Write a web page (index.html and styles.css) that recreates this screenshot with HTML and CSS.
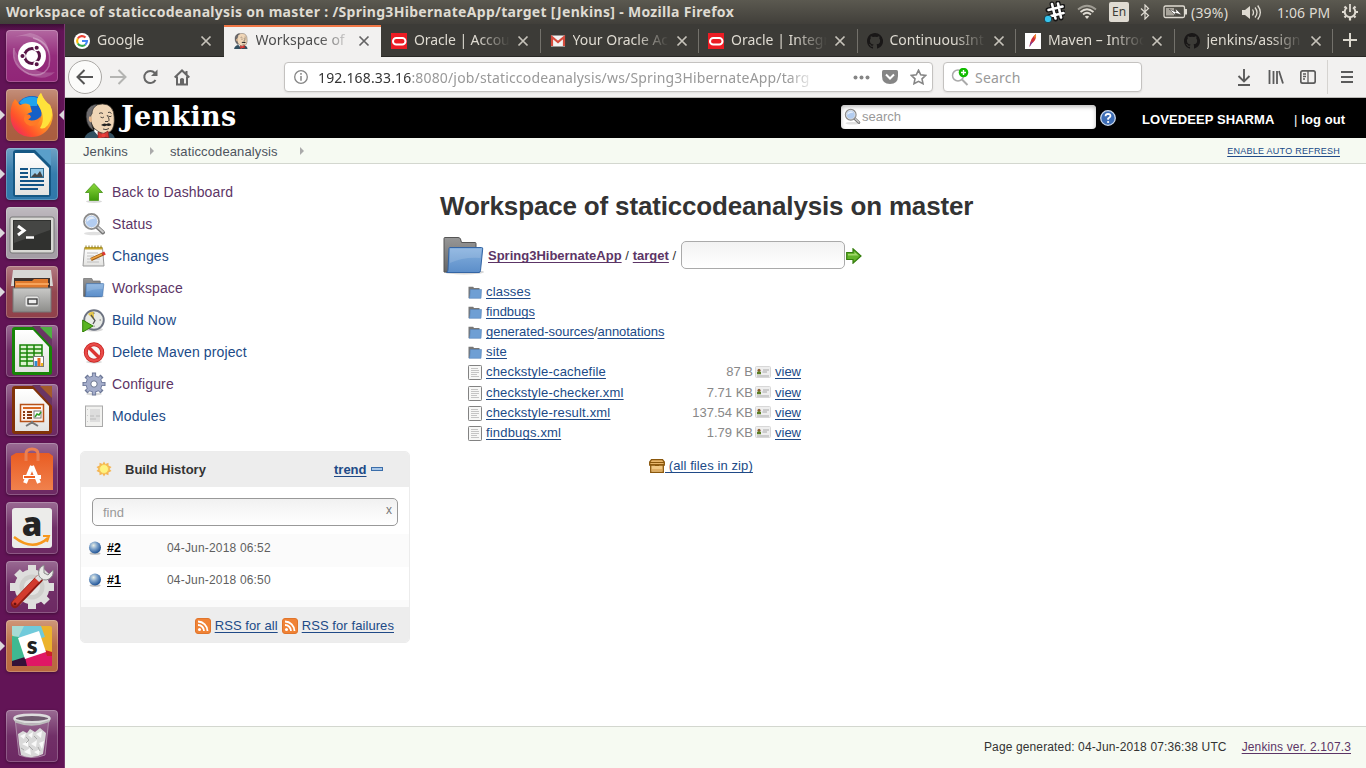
FILE: index.html
```html
<!DOCTYPE html>
<html lang="en">
<head>
<meta charset="utf-8">
<title>Workspace of staticcodeanalysis on master</title>
<link rel="stylesheet" href="styles.css">
</head>
<body>
<svg class="defs" width="0" height="0">
  <defs>
    <linearGradient id="gBlue" x1="0" y1="0" x2="0" y2="1"><stop offset="0" stop-color="#85b0de"/><stop offset="1" stop-color="#5c8ec9"/></linearGradient>
    <linearGradient id="gGray" x1="0" y1="0" x2="0" y2="1"><stop offset="0" stop-color="#979797"/><stop offset="1" stop-color="#666"/></linearGradient>
    <linearGradient id="gGreen" x1="0" y1="0" x2="0" y2="1"><stop offset="0" stop-color="#8ad83a"/><stop offset="1" stop-color="#3f9a0a"/></linearGradient>
    <linearGradient id="gPaper" x1="0" y1="0" x2="0" y2="1"><stop offset="0" stop-color="#fff"/><stop offset="1" stop-color="#e3e3e1"/></linearGradient>
    <linearGradient id="gMetal" x1="0" y1="0" x2="0" y2="1"><stop offset="0" stop-color="#c9c9c7"/><stop offset="1" stop-color="#8d8d8a"/></linearGradient>
    <radialGradient id="gBall" cx=".38" cy=".32" r=".7"><stop offset="0" stop-color="#e8eee6"/><stop offset=".45" stop-color="#7da2ca"/><stop offset="1" stop-color="#1b4f92"/></radialGradient>
    <linearGradient id="gFox" x1="1" y1="0" x2="0" y2="1"><stop offset="0" stop-color="#fff44f"/><stop offset=".4" stop-color="#ffa022"/><stop offset=".72" stop-color="#ff4f2c"/><stop offset="1" stop-color="#e8147c"/></linearGradient>
    <linearGradient id="gBag" x1="0" y1="0" x2="0" y2="1"><stop offset="0" stop-color="#e95c22"/><stop offset="1" stop-color="#f0814d"/></linearGradient>
    <symbol id="folder" viewBox="0 0 42 38">
      <ellipse cx="21" cy="35" rx="20" ry="2.5" fill="#000" opacity=".16"/>
      <path d="M1 35V1.500Q1 .5 2 .5H15Q17 .5 17.500 2L18.500 5.500H32Q33 5.500 33 6.500V35Z" fill="url(#gGray)" stroke="#555"/>
      <path d="M6 11.500Q6 10.500 7 10.500H38.500Q40 10.500 39.700 12L37.500 33.500Q37.300 35.500 36 35.500H3.500Q4.800 35 5 33Z" fill="url(#gBlue)" stroke="#3465a4"/>
      <path d="M7 12H38.500L37.500 21Q20 20 7 26Z" fill="#fff" opacity=".14"/>
    </symbol>
    <symbol id="smallfolder" viewBox="0 0 14 13">
      <path d="M.5 12V.8H5.200L6 2H11.500V12Z" fill="#777"/>
      <path d="M2.200 3.500H13.500L13 12.300H1Q2 11.500 2.200 3.500Z" fill="#6f9fd4" stroke="#5583b8" stroke-width=".6"/>
    </symbol>
    <symbol id="file" viewBox="0 0 14 15">
      <rect x=".5" y=".5" width="13" height="14" rx=".8" fill="#f7f7f6" stroke="#828282"/>
      <path d="M3 3.500H10M3 5.500H11M3 7.500H11M3 9.500H9M3 11.500H11" stroke="#c4c4c4"/>
    </symbol>
    <symbol id="card" viewBox="0 0 16 12">
      <rect x=".5" y=".5" width="15" height="11" rx="1" fill="#eee" stroke="#d7d7d7"/>
      <circle cx="4" cy="4.200" r="1.500" fill="#8a5a2b"/><path d="M2 8.200V6Q4 4.500 6 6V8.200Z" fill="#5c7d23"/>
      <path d="M8 4H14M7.500 6H12M2 10H14" stroke="#aaa"/>
    </symbol>
    <symbol id="magnifier" viewBox="0 0 24 24">
      <ellipse cx="12" cy="21.500" rx="10" ry="1.800" fill="#000" opacity=".12"/>
      <path d="M14.500 14.500L21 20.500" stroke="#777" stroke-width="4" stroke-linecap="round"/><path d="M15 14.500L21 20" stroke="#ccc" stroke-width="1.800" stroke-linecap="round"/>
      <circle cx="9.500" cy="9.500" r="7.300" fill="#b3cdf0" stroke="#8b8b8b" stroke-width="2.200"/><circle cx="9.500" cy="9.500" r="6.200" fill="none" stroke="#eee"/>
      <path d="M4.700 10Q4.500 5 10 4.500Q12.500 5 13 7Q9 6 4.700 10Z" fill="#fff" opacity=".65"/>
    </symbol>
    <symbol id="oracle" viewBox="0 0 16 16"><rect width="16" height="16" fill="#ec1c24"/><rect x="2" y="5" width="12.500" height="6.500" rx="3.250" fill="none" stroke="#fff" stroke-width="2"/></symbol>
    <symbol id="github" viewBox="0 0 16 16"><path fill="#191717" d="M8 0C3.580 0 0 3.580 0 8c0 3.540 2.290 6.530 5.470 7.590.4.070.55-.17.55-.38V13.700c-2.010.37-2.530-.49-2.690-.94-.09-.23-.48-.94-.82-1.130-.28-.15-.68-.52-.01-.53.63-.01 1.080.58 1.230.82.72 1.210 1.870.87 2.330.66.07-.52.28-.87.51-1.070-1.780-.2-3.640-.89-3.640-3.950 0-.87.31-1.590.82-2.150-.08-.2-.36-1.020.08-2.120 0 0 .67-.21 2.200.82a7.500 7.500 0 0 1 4 0c1.530-1.040 2.200-.82 2.200-.82.44 1.100.16 1.920.08 2.120.51.56.82 1.270.82 2.150 0 3.070-1.870 3.750-3.650 3.950.29.25.54.73.54 1.480v2.220c0 .21.15.46.55.38A8 8 0 0 0 8 0Z"/></symbol>
    <symbol id="close" viewBox="0 0 12 12"><path d="M1.500 1.500L10.500 10.500M10.500 1.500L1.500 10.500" stroke="currentColor" stroke-width="1.700"/></symbol>
    <symbol id="butler" viewBox="0 0 34 37">
      <path d="M1 37Q2 30 10 28L25 29Q32 31 32 37Z" fill="#335061"/>
      <path d="M11 28L18 36L24 29L22 25L12 24Z" fill="#fff"/>
      <path d="M5 17Q4 5 13 2Q27-2 30.500 9Q32.500 20 29.500 26Q25 33 16 29Q10 26 8 20Q5 20 5 17Z" fill="#f0d6b7" stroke="#3a332c" stroke-width=".8"/>
      <path d="M4 19Q1 8 8 3Q14 0 14 2Q9 5 9 11Q7 12 8 18Q9 24 11 28Q5 24 4 19Z" fill="#6d6b6d" stroke="#222" stroke-width=".6"/>
      <path d="M6 14Q8 12 9 16Q9 20 7 19Q5 17 6 14Z" fill="#e3b68c"/>
      <path d="M16 10.500Q18 9 20 10.500M25 9.500Q27 8.500 28.500 10.500M17.500 14Q19.500 15.500 21 14M25.500 13Q27 14.500 28.500 13M24 12Q27.500 17 25 18.500L22 18.500M20 26Q23 27.500 26 25.500" stroke="#222" stroke-width=".8" fill="none"/>
      <path d="M18 22Q21 19.500 23.500 21Q26.500 19 28.500 22Q26 23.500 23.500 22.500Q21 24 18 22Z" fill="#222"/>
      <path d="M15 29L20 31L25 28L26 35L20 34L15 37Z" fill="#d33833" stroke="#81201c" stroke-width=".7"/><circle cx="20.500" cy="32.500" r="2" fill="#ef3d3a"/>
    </symbol>
    <symbol id="rss" viewBox="0 0 16 16"><rect x=".5" y=".5" width="15" height="15" rx="2.500" fill="#f08336" stroke="#e0752c"/><circle cx="4.500" cy="11.500" r="1.500" fill="#fff"/><path d="M3 7A6 6 0 0 1 9 13M3 3.500A9.500 9.500 0 0 1 12.500 13" fill="none" stroke="#fff" stroke-width="1.800"/></symbol>
    <symbol id="ball" viewBox="0 0 14 14"><ellipse cx="7" cy="12.500" rx="5.500" ry="1.300" fill="#000" opacity=".25"/><circle cx="7" cy="6.600" r="6" fill="url(#gBall)"/></symbol>
  </defs>
</svg>

<header class="titlebar">
  <span class="title">Workspace of staticcodeanalysis on master : /Spring3HibernateApp/target [Jenkins] - Mozilla Firefox</span>
  <div class="indicators">
    <svg class="i-slack" width="22" height="22" viewBox="0 0 22 22"><path d="M9 3L12.500 18M15 2L18 17M5 9L20 5.500M6.500 15.500L21 12" stroke="#161616" stroke-width="5" stroke-linecap="round"/><path d="M9 3L12.500 17.500M15 2.500L18 16.500M5.500 9L19.500 5.500M7 15.200L20.500 12" stroke="#fff" stroke-width="2.600" stroke-linecap="round"/><circle cx="5" cy="18" r="3.800" fill="#36c5ee" stroke="#203a42"/></svg>
    <svg class="i-wifi" width="20" height="16" viewBox="0 0 20 16" fill="none" stroke="#dfdbd2" stroke-width="1.700"><path d="M1 5.500Q10-2 19 5.500" opacity=".55"/><path d="M3.500 8Q10 2.500 16.500 8"/><path d="M6 10.500Q10 7 14 10.500"/><path d="M7.800 12.500L10 15L12.200 12.500Q10 11 7.800 12.500" fill="#dfdbd2" stroke="none"/></svg>
    <span class="lang">En</span>
    <svg class="i-bt" width="10" height="16" viewBox="0 0 10 16"><path d="M1 4.500L8.500 11.500L5 15V1L8.500 4.500L1 11.500" fill="none" stroke="#dfdbd2" stroke-width="1.200"/></svg>
    <svg class="i-bat" width="25" height="14" viewBox="0 0 25 14"><rect x="1" y="1" width="20.500" height="11.500" rx="1.500" fill="none" stroke="#dfdbd2" stroke-width="1.300"/><path d="M23 4V9.500" stroke="#dfdbd2" stroke-width="2"/><rect x="3" y="3" width="8" height="7.500" fill="#a8a49b"/><path d="M6 4L13 7L12.500 3.500L19 10L12 8L12.500 10.500Z" fill="#fff" stroke="#44423d" stroke-width=".6"/></svg>
    <span class="bat">(39%)</span>
    <svg class="i-vol" width="21" height="17" viewBox="0 0 21 17"><path d="M1 6H4L9 2V15L4 11H1Z" fill="#dfdbd2"/><path d="M11.500 5.500Q13.500 8.500 11.500 11.500M14 3.500Q18 8.500 14 13.500M16.700 1.500Q22 8.500 16.700 15.500" fill="none" stroke="#dfdbd2" stroke-width="1.300"/></svg>
    <span class="clock">1:06 PM</span>
    <svg class="i-gear" width="18" height="18" viewBox="0 0 18 18" fill="none" stroke="#dfdbd2"><path d="M6 4.500A5.300 5.300 0 1 0 12 4.500" stroke-width="2"/><path d="M9 1V9" stroke-width="1.800"/><path d="M3.500 3.500L5 5M1 9H3.500M3.500 14.500L5 13M9 15V17.500M13 13L14.500 14.500M14.500 9H17M13 5L14.500 3.500" stroke-width="2.200"/></svg>
  </div>
</header>

<div class="desktop">
<nav class="launcher">
  <div class="tile dash"><svg viewBox="0 0 52 52"><path d="M27 8Q47 13 43 36Q38 48 23 44Q5 36 8 18" fill="none" stroke="#fff" opacity=".3" stroke-width="1.500"/><path d="M3 8Q31 0 43 24Q42 6 24 3ZM8 19Q7 38 26 46Q40 51 49 42Q23 46 8 19" fill="#fff" opacity=".18"/><circle cx="26" cy="26" r="14" fill="#fff"/><circle cx="26" cy="26" r="7.500" fill="none" stroke="#571445" stroke-width="3"/><g fill="#571445" stroke="#fff" stroke-width="1.300"><circle cx="16.500" cy="26" r="2.700"/><circle cx="30.700" cy="17.800" r="2.700"/><circle cx="30.700" cy="34.200" r="2.700"/></g></svg></div>
  <div class="tile copper running focused"><svg viewBox="0 0 52 52"><circle cx="26" cy="24" r="17" fill="#1560c8"/><path d="M13 14Q20 5 32 9L31 17L20 17Z" fill="#20a4ed"/><path d="M9 10L14 16Q20 13 24 16L26 23Q21 24 19 28Q23 33 31 32Q40 27 31 14Q31 8 35 4Q38 12 44 16Q49 26 45 35Q39 48 25 48Q9 47 5 32Q3 17 9 10Z" fill="url(#gFox)"/><path d="M31 14Q31 8 35 4Q38 12 44 16Q49 26 42 36Q38 41 34 39Q41 28 31 14" fill="#ffe23b"/><path d="M19 26Q24 24 25 28L22 31Q30 33 35 27Q34 37 24 37Q15 33 19 26" fill="#ff7a26"/></svg></div>
  <div class="tile blue running"><svg viewBox="0 0 52 52"><rect x="7" y="2" width="38" height="47" rx="3" fill="#165884"/><path d="M9 5H28L43 20V47H9Z" fill="url(#gPaper)"/><path d="M29 2H45V18Z" fill="#5a9fca"/><path d="M14 21H22M14 25H22M14 29H22M14 33H38M14 37H38M14 41H32" stroke="#135486" stroke-width="2"/><rect x="24.500" y="20.500" width="13" height="9" fill="#96cae8" stroke="#2f6b90"/><path d="M25 29L29 25L31 27L34 23L37 29Z" fill="#444"/></svg></div>
  <div class="tile silver running"><svg viewBox="0 0 52 52"><rect x="4" y="10" width="44" height="36" rx="2" fill="#d8d8d4" stroke="#777"/><rect x="7" y="13" width="38" height="30" fill="#30312f"/><path d="M8 14H44V23L8 36Z" fill="#fff" opacity=".1"/><path d="M12 19L18 23.500L12 28" stroke="#fff" stroke-width="3" fill="none"/><path d="M20 30.500H28" stroke="#fff" stroke-width="2.500"/></svg></div>
  <div class="tile rose running"><svg viewBox="0 0 52 52"><path d="M7 4H45L47 20H5Z" fill="#d7d7d4"/><path d="M8 12H44V25H8Z" fill="#40322c"/><path d="M9 15H26L28 13H42V24H9Z" fill="#e07a2d"/><path d="M10 18H43" stroke="#ffb36b" stroke-width="1.500"/><path d="M7 22H45V46H7Z" fill="url(#gMetal)" stroke="#777"/><rect x="19" y="30" width="14" height="11" rx="2" fill="#e6e6e4" stroke="#999"/><rect x="22" y="33" width="9" height="5" fill="#eee" stroke="#333" stroke-width="1.300"/></svg></div>
  <div class="tile violet"><svg viewBox="0 0 52 52"><rect x="6" y="2" width="40" height="48" rx="3" fill="#188408"/><path d="M9 5H27L43 22V47H9Z" fill="url(#gPaper)"/><path d="M26 1H34L46 14V22Z" fill="#6a3564"/><path d="M34 2H46V14Z" fill="#4fae43"/><path d="M14 20H36V41H14ZM14 24H36M14 28H36M14 32H36M14 36H36M21 20V41M28 20V41" fill="#dcf3cf" stroke="#188408" stroke-width="1.500"/><rect x="27.500" y="31.500" width="10" height="10" fill="#fff" stroke="#777"/><path d="M30 41V36" stroke="#308bd1" stroke-width="3"/><path d="M33 41V33" stroke="#e56920" stroke-width="3"/><path d="M36 41V38" stroke="#eeb51d" stroke-width="2"/></svg></div>
  <div class="tile violet"><svg viewBox="0 0 52 52"><rect x="6" y="2" width="40" height="48" rx="3" fill="#813309"/><path d="M9 5H27L43 22V47H9Z" fill="url(#gPaper)"/><path d="M26 1H34L46 14V22Z" fill="#6a3564"/><path d="M34 2H46V14Z" fill="#a35b2b"/><rect x="14.500" y="20.500" width="23" height="17" fill="#fff3ec" stroke="#b65117" stroke-width="1.500"/><path d="M17 24H35" stroke="#d96720" stroke-width="2"/><path d="M17 28H19M17 31H19M17 34H19M21 28H26M21 31H26M21 34H26" stroke="#8a3b12" stroke-width="2"/><rect x="28" y="27" width="7" height="7" fill="#fff" stroke="#777"/><path d="M29 33L31 30L33 31L35 28" stroke="#2f9e27" stroke-width="1.500" fill="none"/><path d="M20 42L26 38.500L32 42M26 37V40" stroke="#777" stroke-width="2" fill="none"/></svg></div>
  <div class="tile violet"><svg viewBox="0 0 52 52"><path d="M5 13L10 10H43L47 13V47H5Z" fill="url(#gBag)"/><path d="M20 18V11Q20 6 26 6Q32 6 32 11V18" stroke="#e98054" stroke-width="3" fill="none"/><path d="M26 23L19 40M26 23L33 40" stroke="#fff" stroke-width="4"/><path d="M17 34H35" stroke="#fff" stroke-width="4"/><path d="M18 34H29" stroke="#ef6120" stroke-width="2"/></svg></div>
  <div class="tile violet"><svg viewBox="0 0 52 52"><rect x="6" y="6" width="40" height="40" rx="3" fill="#ececea"/><text x="26" y="33.500" text-anchor="middle" class="amazon">a</text><path d="M8 35Q27 50 42 36" stroke="#f7981d" stroke-width="2.500" fill="none"/><path d="M37 34L43 34L41 40" stroke="#f7981d" stroke-width="2" fill="none"/></svg></div>
  <div class="tile violet"><svg viewBox="0 0 52 52"><g transform="translate(26 26)"><circle r="14" fill="none" stroke="#dededc" stroke-width="7"/><path d="M0-22V22M-22 0H22M-15-15L15 15M15-15L-15 15" stroke="#dededc" stroke-width="8"/><circle r="12.500" fill="#cfcfcc"/><circle r="8" fill="#e4e4e2"/></g><path d="M9 43L33 18" stroke="#8e1b14" stroke-width="8" stroke-linecap="round"/><path d="M9 42L32 18" stroke="#d23b2e" stroke-width="5.500" stroke-linecap="round"/><path d="M31 19L36 14" stroke="#ddd" stroke-width="6"/><path d="M38 4Q31 7 33 15Q37 21 43 18Q48 15 47 9L42 14L38 12Z" fill="#e9e9e6" stroke="#888"/><circle cx="9" cy="43" r="1.500" fill="#611"/></svg></div>
  <div class="tile orange running"><svg viewBox="0 0 52 52"><rect x="6" y="6" width="40" height="40" rx="2" fill="#ecb32c"/><path d="M6 8Q6 6 8 6H35L39 17L14 24L6 8" fill="#70cadb"/><path d="M6 6H18L11 20L6 15Z" fill="#a6dbd5"/><path d="M6 16L13 17L21 41L6 44Z" fill="#3eb991"/><path d="M17 38L38 31L46 35V46H17Z" fill="#e01765"/><path d="M39 30L46 32V36L41 36Z" fill="#cc2027"/><path d="M6 41L19 37L21 46H6Z" fill="#361238"/><path d="M12 18L33 11L40 32L19 39Z" fill="#fff"/><text x="26" y="34" text-anchor="middle" class="slack-s">s</text></svg></div>
  <div class="tile violet trash"><svg viewBox="0 0 52 52"><path d="M9 8L13 45Q26 50 39 45L43 8Z" fill="#fff" fill-opacity=".12" stroke="#b69ab3" stroke-width=".8"/><path d="M12 24L17 21L21 23L24 19L29 22L34 18L40 23L39 31L37 44Q26 50 15 45L13 34Z" fill="#d9d9d9"/><path d="M14 26L20 23L18 29ZM22 25L27 22L26 28ZM30 24L36 21L35 28ZM16 34L22 31L22 37ZM25 34L31 30L30 37ZM33 33L38 31L36 39ZM18 42L24 38L25 45ZM28 42L34 39L33 45Z" fill="#f9f9f9"/><path d="M20 27L23 30L20 33M28 26L31 29M23 36L27 40M32 37L34 41M15 38L18 40" stroke="#a9a9a9" fill="none"/><ellipse cx="26" cy="8.500" rx="17.500" ry="3.800" fill="#6f5b6e" stroke="#ddd" stroke-width="2.500"/><path d="M8.500 10Q26 17 43.500 10V12Q26 19 9 12.500Z" fill="#bbb"/></svg></div>
</nav>

<main class="browser">
  <div class="tabs">
    <div class="tab first"><svg class="fav" viewBox="0 0 16 16"><circle cx="8" cy="8" r="8" fill="#fff"/><g fill="none" stroke-width="2.100"><path d="M11.500 4.500A5 5 0 0 0 3.800 5.500" stroke="#ea4335"/><path d="M3.800 5.500A5 5 0 0 0 3.800 10.500" stroke="#fbbc05"/><path d="M3.800 10.500A5 5 0 0 0 11.300 11.700" stroke="#34a853"/><path d="M11.300 11.700A5 5 0 0 0 13 8H8" stroke="#4285f4"/></g></svg><span class="label">Google</span><svg class="x"><use href="#close"/></svg></div>
    <div class="tab active"><svg class="fav" viewBox="0 0 16 16"><use href="#butler" width="16" height="16"/></svg><span class="label">Workspace of</span><svg class="x"><use href="#close"/></svg></div>
    <div class="tab"><svg class="fav"><use href="#oracle"/></svg><span class="label tight">Oracle | Accou</span><svg class="x"><use href="#close"/></svg></div>
    <div class="tab"><svg class="fav" viewBox="0 0 16 16"><rect x="1" y="2.500" width="14" height="11" fill="#f3f3f3"/><path d="M2 13V4L8 9L14 4V13" fill="none" stroke="#d54b3d" stroke-width="2.200"/></svg><span class="label">Your Oracle Ac</span><svg class="x"><use href="#close"/></svg></div>
    <div class="tab"><svg class="fav"><use href="#oracle"/></svg><span class="label">Oracle | Integr</span><svg class="x"><use href="#close"/></svg></div>
    <div class="tab"><svg class="fav"><use href="#github"/></svg><span class="label">ContinuousInt</span><svg class="x"><use href="#close"/></svg></div>
    <div class="tab"><svg class="fav" viewBox="0 0 16 16"><rect width="16" height="16" fill="#fff"/><path d="M4.500 14Q5 5 11 1Q12 7 6 11Z" fill="#cf3038"/><path d="M4.500 14Q5 10 7 8L7.500 9.500Z" fill="#7b3f9a"/><path d="M9 3L11 1Q11.500 4 10 6Z" fill="#f08b2b"/></svg><span class="label">Maven – Introc</span><svg class="x"><use href="#close"/></svg></div>
    <div class="tab"><svg class="fav"><use href="#github"/></svg><span class="label">jenkins/assign</span><svg class="x"><use href="#close"/></svg></div>
    <div class="newtab"><svg width="14" height="14" viewBox="0 0 14 14"><path d="M7 0V14M0 7H14" stroke="#dcd8cf" stroke-width="2"/></svg></div>
  </div>

  <div class="toolbar">
    <div class="back"><svg width="18" height="16" viewBox="0 0 18 16"><path d="M17 8H2M8.500 1L1.500 8L8.500 15" fill="none" stroke="#555" stroke-width="2"/></svg></div>
    <svg class="fwd" width="17" height="16" viewBox="0 0 17 16"><path d="M0 8H15M8.500 1L15.500 8L8.500 15" fill="none" stroke="#b4b4b2" stroke-width="2"/></svg>
    <svg class="reload" width="16" height="16" viewBox="0 0 16 16"><path d="M13.500 11A6 6 0 1 1 12.800 4" fill="none" stroke="#666" stroke-width="2"/><path d="M15.500 .5V7H9Z" fill="#666"/></svg>
    <svg class="home" width="16" height="17" viewBox="0 0 16 17"><path d="M.7 8.500L8 1.500L15.300 8.500M3 7.500V15.500H13V7.500M12.500 2V6" fill="none" stroke="#666" stroke-width="2"/><path d="M6 15V10Q8 8 10 10V15Z" fill="#666"/></svg>
    <div class="urlbar">
      <svg width="14" height="14" viewBox="0 0 14 14"><circle cx="7" cy="7" r="6.300" fill="none" stroke="#858585" stroke-width="1.300"/><path d="M7 6V10.800M7 3V4.700" stroke="#858585" stroke-width="1.500"/></svg>
      <span class="url"><b>192.168.33.16</b>:8080/job/staticcodeanalysis/ws/Spring3HibernateApp/targ</span>
      <svg class="dots" width="17" height="5" viewBox="0 0 17 5" fill="#858585"><circle cx="2.500" cy="2.500" r="2"/><circle cx="8.500" cy="2.500" r="2"/><circle cx="14.500" cy="2.500" r="2"/></svg>
      <svg class="pocket" width="16" height="14" viewBox="0 0 16 14"><path d="M1.500 0H14.500Q16 0 16 1.500V6Q16 14 8 14Q0 14 0 6V1.500Q0 0 1.500 0Z" fill="#858585"/><path d="M4 4.500L8 8.500L12 4.500" stroke="#fff" stroke-width="2" fill="none"/></svg>
      <svg width="17" height="16" viewBox="0 0 17 16"><path d="M8.500 1.200L10.700 5.800L15.700 6.400L12 9.800L13 14.700L8.500 12.300L4 14.700L5 9.800L1.300 6.400L6.300 5.800Z" fill="none" stroke="#858585" stroke-width="1.600"/></svg>
    </div>
    <div class="searchbar"><svg width="18" height="18" viewBox="0 0 18 18"><circle cx="7" cy="7.500" r="5.500" fill="none" stroke="#aaa" stroke-width="1.500"/><path d="M11 11.500L16.500 17" stroke="#aaa" stroke-width="2"/><circle cx="12.500" cy="4.500" r="4.800" fill="#12bc00"/><path d="M12.500 2V7M10 4.500H15" stroke="#fff" stroke-width="1.400"/></svg><span>Search</span></div>
    <div class="tools">
      <svg width="14" height="17" viewBox="0 0 14 17"><path d="M7 0V12M1.500 7L7 12.500L12.500 7M1 16H13" fill="none" stroke="#5b5b5b" stroke-width="1.900"/></svg>
      <svg width="16" height="14" viewBox="0 0 16 14"><path d="M1.500 0V14M5.500 1V14M9 1V14M11 1L15 13.500" stroke="#5b5b5b" stroke-width="1.800"/></svg>
      <svg width="16" height="14" viewBox="0 0 16 14"><rect x=".8" y=".8" width="14.400" height="12.400" rx="2" fill="none" stroke="#5b5b5b" stroke-width="1.700"/><path d="M8 1V13M3 4H6M3 6.500H6M3 9H5" stroke="#5b5b5b" stroke-width="1.300"/></svg>
      <i class="divider"></i>
      <svg width="12" height="12" viewBox="0 0 12 12"><path d="M0 1H12M0 6H12M0 11H12" stroke="#5b5b5b" stroke-width="1.800"/></svg>
    </div>
  </div>

  <div class="jheader">
    <svg class="mascot" width="34" height="37"><use href="#butler"/></svg>
    <span class="brand">Jenkins</span>
    <div class="jsearch"><svg width="17" height="17"><use href="#magnifier"/></svg><span>search</span></div>
    <svg class="help" width="16" height="16" viewBox="0 0 16 16"><circle cx="8" cy="8" r="7.300" fill="#3d6db5" stroke="#c9d7ea" stroke-width="1.300"/><path d="M5.500 6.300Q5.600 3.800 8 3.800Q10.500 3.900 10.500 6Q10.300 7.200 8.100 8.500V9.800" stroke="#fff" stroke-width="1.700" fill="none"/><circle cx="8.100" cy="12" r="1.100" fill="#fff"/></svg>
    <span class="user">LOVEDEEP SHARMA</span>
    <span class="logout"><i>|</i> log out</span>
  </div>

  <div class="crumbs">
    <span class="c1">Jenkins</span><svg width="4" height="8"><path d="M0 0L4 4L0 8Z" fill="#aaa"/></svg><span class="c2">staticcodeanalysis</span><svg width="4" height="8"><path d="M0 0L4 4L0 8Z" fill="#aaa"/></svg>
    <a class="refresh">ENABLE AUTO REFRESH</a>
  </div>

  <div class="page">
    <aside class="side">
      <div class="tasks">
        <div class="task visited"><svg viewBox="0 0 24 24"><ellipse cx="12" cy="21.500" rx="8" ry="1.500" fill="#000" opacity=".15"/><path d="M12 3.500L20.500 12.500H16.500V20.500H7.500V12.500H3.500Z" fill="url(#gGreen)" stroke="#5aa02c"/></svg><span>Back to Dashboard</span></div>
        <div class="task visited"><svg viewBox="0 0 24 24"><use href="#magnifier"/></svg><span>Status</span></div>
        <div class="task"><svg viewBox="0 0 24 24"><path d="M2.500 4H20.500L22 22H1Z" fill="url(#gPaper)" stroke="#999"/><path d="M2.500 3H20.500V5.500H2.500Z" fill="#c5a72a"/><path d="M4 1.500V4M7 1.500V4M10 1.500V4M13 1.500V4M16 1.500V4M19 1.500V4" stroke="#8b7a28"/><path d="M5 9H16M5 12H12M5 15H18M5 18H17" stroke="#c0c0c0"/><path d="M9 15.500L21 10" stroke="#9a5710" stroke-width="3.400"/><path d="M9 15.300L20 10.300" stroke="#eca240" stroke-width="1.700"/><path d="M20.500 10.200L23 9" stroke="#dc3832" stroke-width="3.400"/></svg><span>Changes</span></div>
        <div class="task visited"><svg viewBox="0 0 24 24"><use href="#folder" x="1" y="2" width="22" height="20"/></svg><span>Workspace</span></div>
        <div class="task"><svg viewBox="0 0 24 24"><ellipse cx="12" cy="21.500" rx="9" ry="2" opacity=".15"/><circle cx="12" cy="12" r="9.800" fill="#e8eae6" stroke="#6c7280" stroke-width="1.900"/><path d="M12 12L6 6Q9 3 12 4Z" fill="#e5c74c"/><path d="M9 7L13 12.500L11 16" stroke="#555" stroke-width="1.300" fill="none"/><path d="M12 4.500V6M19 12H17.500M12 19V17.500" stroke="#777"/><path d="M.7 12L11 18L.7 24Z" fill="#5ab522" stroke="#338207"/></svg><span>Build Now</span></div>
        <div class="task"><svg viewBox="0 0 24 24"><ellipse cx="12" cy="22" rx="8" ry="1.500" opacity=".15"/><circle cx="12" cy="12.500" r="8.200" fill="#f7f7f7" stroke="#c2201d" stroke-width="4"/><circle cx="12" cy="12.500" r="8.200" fill="none" stroke="#e94b49" stroke-width="2.600"/><path d="M6.500 7L17.500 18" stroke="#dc3532" stroke-width="3.300"/></svg><span>Delete Maven project</span></div>
        <div class="task visited"><svg viewBox="0 0 24 24"><ellipse cx="12" cy="22" rx="8" ry="1.300" opacity=".15"/><g stroke="#6c7796" stroke-width="4.200"><path d="M12 .5V23.500M.5 12H23.500M4 4L20 20M20 4L4 20"/></g><circle cx="12" cy="12" r="8" fill="#a3acc9" stroke="#7681a3"/><path d="M12 1.500V22.500M1.500 12H22.500M5 5L19 19M19 5L5 19" stroke="#a3acc9" stroke-width="2.500"/><circle cx="12" cy="12" r="3.200" fill="#fff" stroke="#69748f"/></svg><span>Configure</span></div>
        <div class="task"><svg viewBox="0 0 24 24"><rect x="3.500" y="2" width="17" height="20.500" fill="#f1f1ef" stroke="#aaa"/><path d="M8 5H18V18H8Z" fill="#ddd"/><path d="M8 12H12M14 12H18M8 15H14" stroke="#bbb"/><path d="M5.500 5V19" stroke="#ccc" stroke-dasharray="1 5"/></svg><span>Modules</span></div>
      </div>
      <section class="history">
        <div class="hhead"><svg width="16" height="16" viewBox="0 0 16 16"><path d="M8 .5L9.500 3L12.500 1.800V4.500L15.500 6L13.500 8L15.500 10L12.500 11.500V14.200L9.500 13L8 15.500L6.500 13L3.500 14.200V11.500L.5 10L2.500 8L.5 6L3.500 4.500V1.800L6.500 3Z" fill="#f5b552"/><circle cx="8" cy="8" r="4.500" fill="#fff380" stroke="#f6c65a"/></svg><b>Build History</b><a>trend</a><svg width="12" height="4" viewBox="0 0 12 4"><rect x=".5" y=".5" width="11" height="3" fill="#a9c7e8" stroke="#3b6eaa"/></svg></div>
        <div class="hfind"><div class="find"><span>find</span><i>x</i></div></div>
        <div class="build odd"><svg width="14" height="14"><use href="#ball"/></svg><a>#2</a><span>04-Jun-2018 06:52</span></div>
        <div class="build even"><svg width="14" height="14"><use href="#ball"/></svg><a>#1</a><span>04-Jun-2018 06:50</span></div>
        <div class="hpad"></div>
        <div class="hfoot"><svg width="16" height="16"><use href="#rss"/></svg><a>RSS for all</a><svg width="16" height="16"><use href="#rss"/></svg><a>RSS for failures</a></div>
      </section>
    </aside>

    <section class="main">
      <h1>Workspace of staticcodeanalysis on master</h1>
      <div class="path"><svg width="42" height="38"><use href="#folder"/></svg><a class="p1">Spring3HibernateApp</a><span>/</span><a class="p2">target</a><span>/</span><div class="pathinput"></div><svg class="go" width="16" height="16" viewBox="0 0 16 16"><path d="M.7 4.500H7V.8L15 8L7 15.200V11.500H.7Z" fill="#62b32a" stroke="#357d0d" stroke-width="1.200"/><path d="M2 6H8.500V4L12.500 7.500H2Z" fill="#c4ec91" opacity=".65"/></svg></div>
      <div class="files">
        <div class="row"><svg width="14" height="13"><use href="#smallfolder"/></svg><span class="name wide"><a>classes</a></span></div>
        <div class="row"><svg width="14" height="13"><use href="#smallfolder"/></svg><span class="name"><a>findbugs</a></span></div>
        <div class="row"><svg width="14" height="13"><use href="#smallfolder"/></svg><span class="name"><a>generated-sources</a>/<a>annotations</a></span></div>
        <div class="row"><svg width="14" height="13"><use href="#smallfolder"/></svg><span class="name wide"><a>site</a></span></div>
        <div class="row"><svg width="14" height="15"><use href="#file"/></svg><span class="name wide"><a>checkstyle-cachefile</a></span><span class="size">87 B</span><svg width="16" height="12"><use href="#card"/></svg><a class="view">view</a></div>
        <div class="row"><svg width="14" height="15"><use href="#file"/></svg><span class="name wide"><a>checkstyle-checker.xml</a></span><span class="size">7.71 KB</span><svg width="16" height="12"><use href="#card"/></svg><a class="view">view</a></div>
        <div class="row"><svg width="14" height="15"><use href="#file"/></svg><span class="name wide"><a>checkstyle-result.xml</a></span><span class="size">137.54 KB</span><svg width="16" height="12"><use href="#card"/></svg><a class="view">view</a></div>
        <div class="row"><svg width="14" height="15"><use href="#file"/></svg><span class="name wide"><a>findbugs.xml</a></span><span class="size">1.79 KB</span><svg width="16" height="12"><use href="#card"/></svg><a class="view">view</a></div>
      </div>
      <div class="zip"><svg width="16" height="14" viewBox="0 0 16 14"><path d="M2.500 .7H13.500L15.300 3V6H.7V3Z" fill="#e8b56a" stroke="#8a570c" stroke-width="1.300"/><path d="M1.700 6H14.300V13.300H1.700Z" fill="#f1c783" stroke="#8a570c" stroke-width="1.300"/><path d="M1 3.500H15M6 6.500H10" stroke="#8a570c"/><path d="M3 11H13" stroke="#ca9143"/></svg><a>&nbsp;(all files in zip)</a></div>
    </section>
  </div>

  <footer><span>Page generated: 04-Jun-2018 07:36:38 UTC</span><a>Jenkins ver. 2.107.3</a></footer>
</main>
</div>
</body>
</html>
```
FILE: styles.css
```css
* { box-sizing: border-box; }
body { margin: 0; width: 1366px; height: 768px; overflow: hidden; background: #fff; font-family: "Liberation Sans", Arial, sans-serif; font-size: 13px; color: #333; white-space: nowrap; }
svg { flex: none; display: block; }
.defs { position: absolute; }
i { font-style: normal; }
a { text-decoration: underline; text-decoration-skip-ink: none; text-decoration-thickness: 1px; text-underline-offset: 2px; color: #204a87; }

.titlebar { height: 24px; display: flex; align-items: center; padding-left: 6px; background: linear-gradient(#5b5950, #413f3a); color: #dfdbd2; font-family: "Noto Sans", sans-serif; }
.title { font-size: 14px; font-weight: 700; letter-spacing: .31px; line-height: 24px; }
.indicators { margin-left: auto; display: flex; align-items: center; height: 24px; font-size: 14px; }
.i-slack { margin-right: 12px; }
.i-wifi { margin-right: 12px; }
.lang { width: 20px; height: 20px; border-radius: 2px; background: #dfdbd2; color: #3c3b37; font-size: 12px; line-height: 20px; text-align: center; margin-right: 11px; }
.i-bt { margin-right: 13px; }
.i-bat { margin-right: 3px; }
.bat { width: 38px; margin-right: 12px; letter-spacing: .2px; }
.i-vol { margin-right: 15px; }
.clock { width: 52px; margin-right: 12px; letter-spacing: .1px; }
.i-gear { margin-right: 7px; }

.desktop { display: flex; height: 744px; }
.launcher { width: 65px; background: linear-gradient(#3d0d36, #621456 7px, #621456); border-right: 1px solid #7c3a72; padding: 6px 0 0 6px; display: flex; flex-direction: column; gap: 7px; }
.tile { width: 52px; height: 52px; flex: none; border-radius: 4px; position: relative; box-shadow: inset 0 0 0 1px rgba(255,255,255,.22), 0 1px 3px rgba(0,0,0,.35); background-image: linear-gradient(rgba(255,255,255,.32), rgba(255,255,255,.05) 50%, rgba(255,255,255,.02)); }
.tile svg { width: 52px; height: 52px; }
.dash { background-color: #8f2175; }
.copper { background-color: #a85a3b; }
.blue { background-color: #2b75a8; }
.silver { background-color: #a29ba3; }
.rose { background-color: #8e3d47; }
.violet { background-color: #6a2560; }
.orange { background-color: #b8663b; }
.trash { margin-top: 31px; }
.running::before { content: ""; position: absolute; left: -6px; top: 21px; border: 5px solid transparent; border-left-color: #dcd8dc; border-right: 0; }
.focused::after { content: ""; position: absolute; right: -6px; top: 21px; border: 5px solid transparent; border-right-color: #dcd8dc; border-left: 0; }
.amazon { font: 800 33px "Open Sans", sans-serif; fill: #242424; }
.slack-s { font: 800 24px Lato, sans-serif; fill: #222; }

.browser { width: 1301px; display: flex; flex-direction: column; }
.tabs { height: 33px; flex: none; display: flex; background: #3c3b37; border-bottom: 1px solid #292825; font-family: "Noto Sans", sans-serif; font-size: 14px; color: #dfdbd2; }
.tab { width: 158.5px; flex: none; display: flex; align-items: center; padding: 1px 0 0 9px; background: linear-gradient(#73716b, #73716b) right 5px / 1px 24px no-repeat; }
.tab.first { background: none; }
.tab.active { width: 157.500px; margin: 1px 1px -1px 0; background: #f2f1f0; color: #4c4c4c; border-top: 2px solid #f07746; padding-bottom: 2px; padding-top: 0; height: 32px; }
.fav { width: 16px; height: 16px; }
.label { width: 98px; height: 24px; line-height: 22px; margin-left: 7px; letter-spacing: 0; -webkit-mask-image: linear-gradient(90deg, #000 65%, transparent 98%); mask-image: linear-gradient(90deg, #000 65%, transparent 98%); }
.tight { letter-spacing: -.1px; }
.x { width: 12px; height: 12px; margin-left: 5px; opacity: .85; }
.active .x { margin-left: 4px; }
.newtab { width: 33px; display: flex; align-items: center; justify-content: center; }

.toolbar { height: 41px; flex: none; display: flex; align-items: center; background: #f2f1f0; border-bottom: 1px solid #bab8b5; font-family: "Noto Sans", sans-serif; font-size: 14px; padding-left: 3px; }
.back { width: 34px; height: 34px; border-radius: 50%; border: 1px solid #aaa8a5; background: #fbfbfa; display: flex; align-items: center; justify-content: center; }
.fwd { margin-left: 8px; }
.reload { margin-left: 15px; }
.home { margin-left: 16px; }
.urlbar { width: 649px; height: 30px; margin-left: 94px; border: 1px solid #c4c2c0; border-radius: 4px; background: #fff; display: flex; align-items: center; padding-left: 9px; box-shadow: 0 1px 2px rgba(0,0,0,.08); }
.url { margin-left: 10px; width: 500px; color: #999; letter-spacing: .16px; -webkit-mask-image: linear-gradient(90deg, #000 94%, transparent 99.5%); mask-image: linear-gradient(90deg, #000 94%, transparent 99.5%); }
.url b { font-weight: 400; color: #333; }
.dots { margin-left: 35px; }
.pocket { margin: 0 12px; }
.searchbar { width: 199px; height: 30px; margin-left: 10px; border: 1px solid #c4c2c0; border-radius: 4px; background: #fff; display: flex; align-items: center; gap: 6px; padding-left: 7px; color: #999; box-shadow: 0 1px 2px rgba(0,0,0,.08); letter-spacing: .2px; }
.tools { margin-left: auto; padding-right: 13px; display: flex; align-items: center; }
.tools svg:nth-child(1) { margin-right: 17px; }
.tools svg:nth-child(2) { margin-right: 16px; }
.tools svg:nth-child(3) { margin-right: 11px; }
.divider { width: 1px; height: 34px; background: #d5d3d0; margin-right: 13px; }

.jheader { height: 40px; flex: none; background: #000; display: flex; align-items: center; padding-left: 18px; color: #fff; overflow: hidden; font-weight: 700; }
.mascot { margin-top: 6px; }
.brand { width: 120px; margin-left: 4px; font-family: "DejaVu Serif", serif; font-size: 27px; line-height: 36px; padding-bottom: 3px; letter-spacing: .3px; }
.jsearch { width: 255px; height: 24px; margin: -3px 0 0 600px; border-radius: 4px; background: #fff; box-shadow: inset 0 2px 4px #bbb; display: flex; align-items: center; padding-left: 3px; font-weight: 400; color: #999; }
.jsearch span { margin-left: 1px; }
.help { margin: -1px 26px 0 4px; }
.user { width: 152px; margin-top: 3px; letter-spacing: .08px; }
.logout { margin-top: 3px; letter-spacing: .1px; }
.logout i { font-weight: 400; }

.crumbs { height: 26px; flex: none; background: #f6faf2; border-bottom: 1px solid #d3d7cf; display: flex; align-items: center; padding: 1px 26px 0 18px; color: #4d545d; letter-spacing: .12px; }
.c1 { width: 67px; }
.c2 { width: 130px; margin-left: 16px; }
.refresh { margin-left: auto; font-size: 9px; letter-spacing: .26px; color: #204a87; }

.page { height: 562px; flex: none; display: flex; }
.side { width: 345px; margin-left: 15px; padding-top: 12px; }
.tasks { font-size: 14px; letter-spacing: .12px; color: #204a87; }
.task { height: 32px; display: flex; align-items: center; padding-left: 2px; gap: 6px; }
.task svg { width: 24px; height: 24px; }
.visited { color: #5c3566; }
.history { width: 330px; height: 192px; margin-top: 19px; border: 1px solid #ececec; border-radius: 5px; background: #fff; overflow: hidden; }
.hhead { height: 35px; background: #ededed; display: flex; align-items: center; padding: 0 0 1px 15px; }
.hhead b { width: 209px; margin-left: 13px; }
.hhead a { font-weight: 700; margin-right: 4px; }
.hfind { height: 47px; padding: 11px; }
.find { height: 28px; border: 1px solid #999; border-radius: 5px; background: linear-gradient(#f1f1f1, #fff); display: flex; justify-content: space-between; padding: 0 5px 0 10px; line-height: 27px; color: #999; }
.find i { font-size: 12px; line-height: 23px; color: #777; }
.build { height: 33px; display: flex; padding: 6px 0 0 7px; font-size: 12px; line-height: 16px; }
.build.odd { background: #fbfbfb; }
.build.even { padding-top: 5px; }
.build svg { margin-top: 1px; }
.build a { width: 14px; margin-left: 5px; font-weight: 700; color: #000; font-size: 12.500px; }
.build span { margin-left: 46px; color: #5f5f5f; letter-spacing: .18px; }
.hpad { height: 7px; background: #fbfbfb; }
.hfoot { height: 36px; background: #ededed; display: flex; align-items: center; justify-content: flex-end; gap: 4px; padding: 1px 15px 0 0; letter-spacing: .08px; }

.main { padding: 26px 0 0 15px; }
h1 { margin: 0; font-size: 26px; line-height: 32px; height: 32px; letter-spacing: -.165px; }
.path { height: 41px; margin-top: 13px; display: flex; align-items: center; padding-left: 3px; }
.path .p1, .path .p2 { font-weight: 700; color: #5c3566; }
.path .p1 { margin-left: 3px; }
.path span { margin: 0 4px 0 3.500px; }
.pathinput { width: 164px; height: 28px; margin-left: 1px; margin-top: -1px; border: 1px solid #aaa; border-radius: 5px; background: linear-gradient(#f2f2f2, #fff); }
.go { margin-left: 1px; }
.files { margin: 5px 0 0 28px; display: grid; grid-auto-rows: 20.200px; }
.row { display: flex; align-items: center; }
.row > svg:first-child { position: relative; top: 1px; }
.name { width: 197px; margin-left: 4px; letter-spacing: -.03px; }
.wide { letter-spacing: .18px; }
.size { width: 70px; text-align: right; color: #888; margin-right: 2px; }
.view { margin-left: 4px; }
.zip { margin: 13px 0 0 209px; height: 20px; display: flex; align-items: center; letter-spacing: .1px; }
footer { flex: 1; background: #f6faf2; border-top: 1px solid #d3d7cf; display: flex; justify-content: flex-end; padding: 13px 15px 0 0; font-size: 12px; gap: 15px; line-height: 14px; letter-spacing: .13px; }
footer a { color: #5c3566; }
```
